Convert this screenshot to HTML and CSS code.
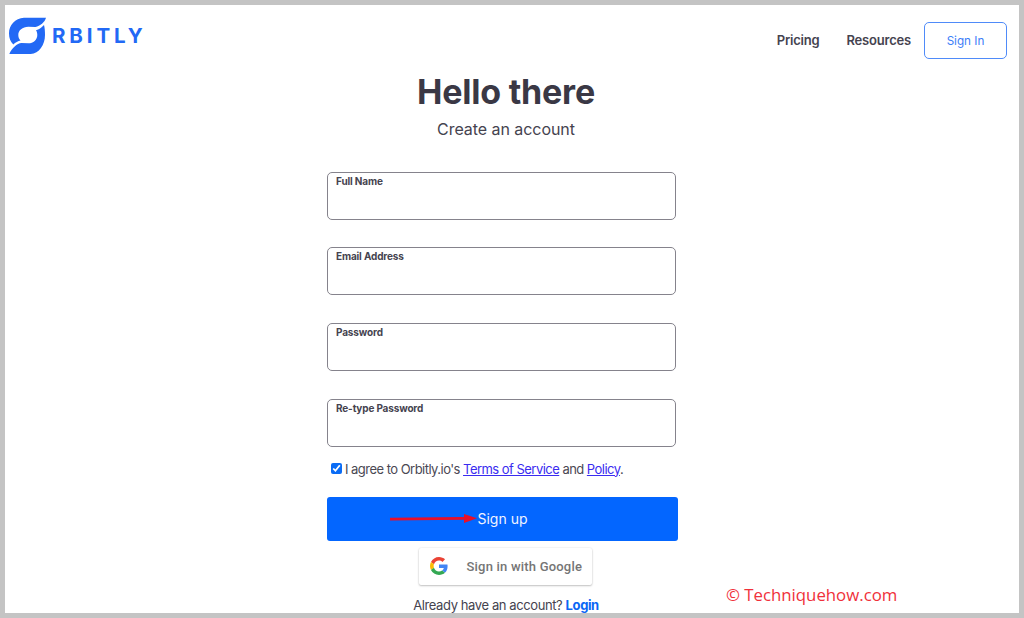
FILE: index.html
```html
<!DOCTYPE html>
<html lang="en">
<head>
<meta charset="utf-8">
<title>Orbitly - Sign up</title>
<link rel="stylesheet" href="styles.css">
</head>
<body>
<div class="frame">
  <header class="topbar">
    <a class="logo" href="#">
      <svg class="logo-mark" width="38" height="38" viewBox="0 0 38 38"><path fill="#2269f5" d="M37 .7H15C6 1.500 0 8 0 16.300C0 21 1.500 25 4.300 27.500C6.500 25.500 9 24 11.500 23.500C10 22 9.300 20 9.300 18C9.300 13.300 13.500 9.700 19.300 9.700L26.500 10C31 9 36 5 37 .7Z"/><path fill="#2269f5" d="M35 8C32 11 30 12.500 27 13.200C27.900 14.500 28.300 16 28.300 18C28.300 22.800 24.500 26.300 19.300 26.300L12.500 26C8 26.500 3 31 .3 37H21.700C30 36.500 36 28 36 18C36 14 35.800 11 35 8Z"/></svg>
      <span class="logo-text">RBITLY</span>
    </a>
    <nav class="nav">
      <div class="nav-links">
        <a class="nav-link" href="#">Pricing</a>
        <a class="nav-link" href="#">Resources</a>
      </div>
      <a class="signin" href="#">Sign In</a>
    </nav>
  </header>
  <main class="content">
    <h1 class="title">Hello there</h1>
    <p class="subtitle">Create an account</p>
    <form class="form">
      <div class="fields">
        <label class="field"><span class="field-label">Full Name</span><input class="field-input" type="text"></label>
        <label class="field"><span class="field-label">Email Address</span><input class="field-input" type="email"></label>
        <label class="field"><span class="field-label">Password</span><input class="field-input" type="password"></label>
        <label class="field"><span class="field-label">Re-type Password</span><input class="field-input" type="password"></label>
      </div>
      <label class="agree"><input class="agree-box" type="checkbox" checked><span>I agree to Orbitly.io's <a href="#">Terms of Service</a> and <a href="#">Policy</a>.</span></label>
      <button class="submit" type="button">Sign up
        <svg class="arrow" width="88" height="10" viewBox="0 0 88 10"><path fill="#e8102a" d="M1 3.800L75 3V0L88 4.300L75 9V5.800L1 6.500Z"/></svg>
      </button>
    </form>
    <button class="google" type="button">
      <svg width="18" height="18" viewBox="0 0 48 48"><path fill="#EA4335" d="M24 9.500c3.500 0 6.700 1.200 9.200 3.600l6.900-6.900C35.900 2.400 30.500 0 24 0 14.600 0 6.500 5.400 2.600 13.200l8 6.200C12.400 13.700 17.700 9.500 24 9.500z"/><path fill="#4285F4" d="M46.900 24.500c0-1.600-.1-3.100-.4-4.500H24v9h12.900c-.6 3-2.200 5.500-4.700 7.200l7.700 6c4.500-4.200 7-10.300 7-17.700z"/><path fill="#FBBC05" d="M10.500 28.600c-.5-1.500-.8-3-.8-4.600s.3-3.100.8-4.600l-8-6.200C.9 16.500 0 20.100 0 24s.9 7.500 2.600 10.800l7.900-6.200z"/><path fill="#34A853" d="M24 48c6.500 0 11.900-2.100 15.900-5.800l-7.700-6c-2.200 1.500-5 2.300-8.200 2.300-6.300 0-11.600-4.200-13.500-9.900l-8 6.200C6.500 42.600 14.600 48 24 48z"/></svg>
      <span class="google-text">Sign in with Google</span>
    </button>
    <p class="login">Already have an account? <a href="#">Login</a></p>
  </main>
  <span class="watermark">© Techniquehow.com</span>
</div>
</body>
</html>
```
FILE: styles.css
```css
* { box-sizing: border-box; }
html, body { margin: 0; height: 100%; overflow: hidden; background: #fff; }
body { font-family: Inter, "Liberation Sans", sans-serif; color: #3a3845; }
a { text-decoration: none; }

.frame {
  position: relative;
  height: 618px;
  border: 5px solid #c4c4c4;
  background: #fff;
  overflow: hidden;
}

.topbar {
  display: flex;
  justify-content: space-between;
  align-items: flex-start;
  height: 60px;
  padding: 12px 12px 0 4px;
}
.logo { display: flex; align-items: center; gap: 5px; color: #2269f5; }
.logo-mark { display: block; }
.logo-text { font-weight: 700; font-size: 20.5px; letter-spacing: 3.9px; line-height: 38px; }
.nav { display: flex; align-items: center; padding-top: 5px; }
.nav-links { display: flex; gap: 27px; margin-right: 13px; padding-bottom: 2px; }
.nav-link { font-size: 13px; font-weight: 600; letter-spacing: -0.2px; color: #45434f; }
.signin {
  display: flex; align-items: center; justify-content: center;
  width: 83px; height: 37px;
  border: 1px solid #4f8bf9; border-radius: 5px;
  font-size: 11.7px; color: #3d7ef8;
}

.content { display: flex; flex-direction: column; align-items: center; width: 352px; margin-left: 322px; }
.title { margin: 6px 0 0 6px; font-size: 34px; line-height: 41px; font-weight: 700; color: #3a3845; letter-spacing: -0.2px; white-space: nowrap; }
.subtitle { margin: 7px 0 0 6px; font-size: 16px; line-height: 20px; font-weight: 400; letter-spacing: -0.05px; color: #45434f; }
.form { width: 100%; margin-top: 32.6px; }
.fields { display: flex; flex-direction: column; gap: 27.7px; width: 349px; }
.field {
  display: flex; flex-direction: column;
  height: 48px; padding: 2px 8px 0;
  border: 1px solid #85838c; border-radius: 5px;
  background: #fff;
}
.field-label { font-size: 10px; letter-spacing: -0.15px; line-height: 13px; font-weight: 700; color: #45434f; }
.field-input { flex: 1; min-height: 0; border: 0; outline: 0; padding: 0; background: transparent; }

.agree { display: flex; align-items: center; gap: 3px; margin: 13px 0 0 4px; font-size: 13px; letter-spacing: -0.53px; line-height: 18px; color: #4a4853; white-space: nowrap; }
.agree-box { width: 11px; height: 11px; margin: 0; accent-color: #0a6cf5; }
.agree a { color: #3a2cf0; text-decoration: underline; }

.submit {
  position: relative;
  display: flex; align-items: center; justify-content: center;
  width: 351px; height: 44px; margin-top: 19px; padding: 0;
  border: 0; border-radius: 3px;
  background: #0366ff; color: #f0f4ff;
  font: 400 14px Inter, sans-serif;
}
.arrow { position: absolute; left: 62px; top: 17px; }

.google {
  display: flex; align-items: center; gap: 19px;
  width: 173px; height: 37px; margin: 7px 0 0 4px; padding: 0 0 0 11px;
  border: 0; border-radius: 2px;
  background: #fff; box-shadow: 0 0 2px rgba(0,0,0,.12), 0 1px 2px rgba(0,0,0,.22);
  font: 500 13px Roboto, sans-serif;
  color: #757575;
}
.google-text { letter-spacing: 0.2px; white-space: nowrap; }
.login { margin: 12px 0 0 6px; font-size: 13px; letter-spacing: -0.4px; line-height: 16px; color: #45434f; white-space: nowrap; }
.login a { color: #0a66f5; font-weight: 700; }

.watermark {
  position: absolute; left: 721px; top: 580px;
  font-family: "Open Sans", sans-serif; font-size: 16.8px; line-height: 20px; color: #f0303a;
}
```
